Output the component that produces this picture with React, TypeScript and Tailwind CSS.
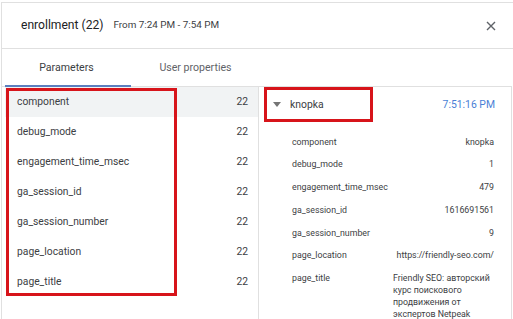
import React from "react";

const params = [
  "component",
  "debug_mode",
  "engagement_time_msec",
  "ga_session_id",
  "ga_session_number",
  "page_location",
  "page_title",
];

const details: [string, string][] = [
  ["component", "knopka"],
  ["debug_mode", "1"],
  ["engagement_time_msec", "479"],
  ["ga_session_id", "1616691561"],
  ["ga_session_number", "9"],
  ["page_location", "https://friendly-seo.com/"],
];

function App() {
  return (
    <div className="w-[513px] h-[319px] overflow-hidden bg-white font-['Roboto','Noto_Sans',sans-serif] text-[#3c4043]">
      <div className="relative ml-[1px] mt-[2px] h-full border-l border-t border-[#e0e0e0]">
        {/* header */}
        <div className="flex h-[46px] items-center border-b border-[#e0e0e0] pl-[19px] pr-[17px]">
          <span className="text-[12.1px] text-[#202124]">enrollment (22)</span>
          <span className="ml-[10px] text-[9.9px] text-[#3c4043]">From 7:24 PM - 7:54 PM</span>
          <svg className="ml-auto" width="10" height="10" viewBox="0 0 10 10">
            <path d="M1 1L9 9M9 1L1 9" stroke="#5f6368" strokeWidth="1.4" />
          </svg>
        </div>

        {/* tabs */}
        <div className="flex h-[38px] border-b border-[#e0e0e0] mr-[1px]">
          <div className="flex w-[258px] text-[10.6px]">
            <div className="relative flex flex-1 items-center justify-center text-[#3c4043]">
              Parameters
              <div className="absolute bottom-[-1px] left-[3px] right-0 h-[2px] bg-[#5b7fbf]" />
            </div>
            <div className="flex flex-1 items-center justify-center text-[#5f6368]">User properties</div>
          </div>
        </div>

        {/* body */}
        <div className="flex mr-[1px] border-r border-[#e0e0e0] h-[233px]">
          <div className="w-[257px] border-r border-[#e0e0e0] pl-[3px]">
            {params.map((p, i) => (
              <div
                key={p}
                className={`flex h-[30px] items-center justify-between pl-[12px] pr-[10px] text-[10.3px] ${
                  i === 0 ? "bg-[#f1f3f4]" : ""
                }`}
              >
                <span>{p}</span>
                <span>22</span>
              </div>
            ))}
          </div>

          <div className="flex-1">
            <div className="flex h-[35px] items-center pl-[14px] pr-[16px] text-[10.4px]">
              <svg width="8" height="5" viewBox="0 0 8 5">
                <path d="M0 0H8L4 5Z" fill="#757575" />
              </svg>
              <span className="ml-[9px]">knopka</span>
              <span className="ml-auto text-[#4a7fd6]">7:51:16 PM</span>
            </div>
            <div className="pt-[9px] pl-[33px] pr-[17px] text-[8.8px]">
              {details.map(([k, v]) => (
                <div key={k} className="flex h-[22.7px] items-center justify-between">
                  <span>{k}</span>
                  <span>{v}</span>
                </div>
              ))}
              <div className="flex items-start justify-between pt-[5px] leading-[12px]">
                <span>page_title</span>
                <span className="w-[101px] whitespace-nowrap">
                  Friendly SEO: авторский
                  <br />
                  курс поискового
                  <br />
                  продвижения от
                  <br />
                  экспертов Netpeak
                </span>
              </div>
            </div>
          </div>
        </div>

        {/* annotation boxes */}
        <div className="pointer-events-none absolute left-[4px] top-[85px] h-[208px] w-[171px] border-[3px] border-[#d7141a]" />
        <div className="pointer-events-none absolute left-[262px] top-[84px] h-[35px] w-[109px] border-[3px] border-[#d7141a]" />
      </div>
    </div>
  );
}

export default App;
